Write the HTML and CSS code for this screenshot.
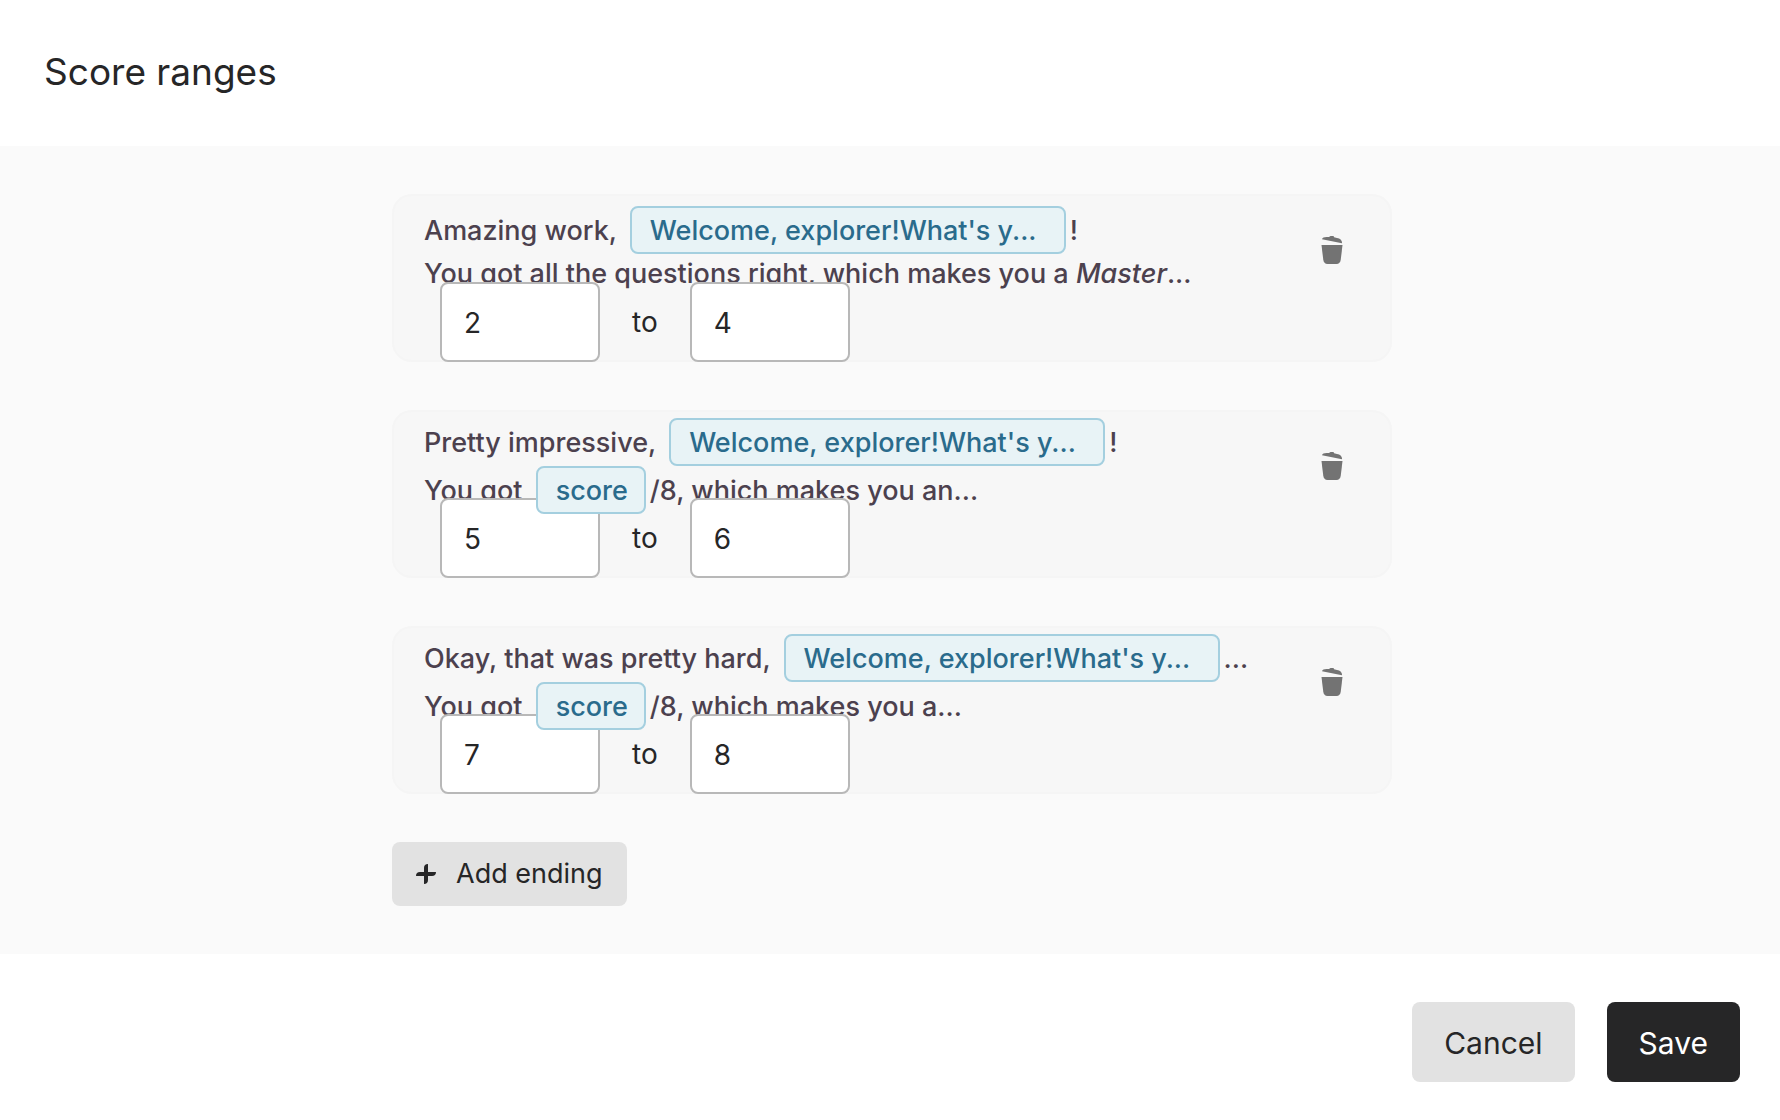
FILE: index.html
```html
<!DOCTYPE html>
<html lang="en">
<head>
  <meta charset="utf-8">
  <meta name="viewport" content="width=device-width, initial-scale=1">
  <title>Score ranges</title>
  <link rel="stylesheet" href="styles.css">
</head>
<body>
  <svg class="sprite" aria-hidden="true">
    <symbol id="icon-trash" viewBox="0 0 22 28">
      <path d="M1 3.200C1.300 1.600 3.200.9 5.600.9L8.200 1c.3-.7.9-1 1.700-1h1.700c.9 0 1.400.5 1.500 1.300l2.900.6c3 .6 5 2 5 4.700v.7z"/>
      <path d="M.5 9h21l-1.700 14.300c-.4 3.300-1.800 4.700-4.300 4.700h-9c-2.500 0-3.900-1.400-4.300-4.700z"/>
    </symbol>
    <symbol id="icon-plus" viewBox="0 0 20 20">
      <path d="M8 12H0c0-2.600 1.400-4 4-4h4V4c0-2.600 1.400-4 4-4v8h8c0 2.600-1.400 4-4 4h-4v4c0 2.600-1.400 4-4 4z"/>
    </symbol>
  </svg>

  <form class="dialog">
    <header class="dialog-header">
      <h1 class="title">Score ranges</h1>
    </header>

    <main class="dialog-body">
      <div class="endings">
        <section class="ending">
          <div class="ending-head">
            <div class="ending-text">
              <p class="line">Amazing work, <span class="chip chip-long">Welcome, explorer!What's y...</span>!</p>
              <p class="line">You got all the questions right, which makes you a <em>Master</em>...</p>
            </div>
            <button class="delete" type="button" aria-label="Delete ending"><svg class="trash"><use href="#icon-trash"/></svg></button>
          </div>
          <div class="range">
            <input class="score" id="from-1" type="text" inputmode="numeric" value="2" aria-label="From score">
            <label for="to-1">to</label>
            <input class="score" id="to-1" type="text" inputmode="numeric" value="4">
          </div>
        </section>

        <section class="ending">
          <div class="ending-head">
            <div class="ending-text">
              <p class="line">Pretty impressive, <span class="chip chip-long">Welcome, explorer!What's y...</span>!</p>
              <p class="line">You got <span class="chip">score</span>/8, which makes you an...</p>
            </div>
            <button class="delete" type="button" aria-label="Delete ending"><svg class="trash"><use href="#icon-trash"/></svg></button>
          </div>
          <div class="range">
            <input class="score" id="from-2" type="text" inputmode="numeric" value="5" aria-label="From score">
            <label for="to-2">to</label>
            <input class="score" id="to-2" type="text" inputmode="numeric" value="6">
          </div>
        </section>

        <section class="ending">
          <div class="ending-head">
            <div class="ending-text">
              <p class="line">Okay, that was pretty hard, <span class="chip chip-long">Welcome, explorer!What's y...</span>...</p>
              <p class="line">You got <span class="chip">score</span>/8, which makes you a...</p>
            </div>
            <button class="delete" type="button" aria-label="Delete ending"><svg class="trash"><use href="#icon-trash"/></svg></button>
          </div>
          <div class="range">
            <input class="score" id="from-3" type="text" inputmode="numeric" value="7" aria-label="From score">
            <label for="to-3">to</label>
            <input class="score" id="to-3" type="text" inputmode="numeric" value="8">
          </div>
        </section>

        <button class="button button-add" type="button"><svg class="plus" aria-hidden="true"><use href="#icon-plus"/></svg>Add ending</button>
      </div>
    </main>

    <footer class="dialog-footer">
      <button class="button button-large" type="button">Cancel</button>
      <button class="button button-large button-primary" type="submit">Save</button>
    </footer>
  </form>
</body>
</html>
```
FILE: styles.css
```css
* {
  box-sizing: border-box;
}

body {
  margin: 0;
  background: #fff;
  color: #262627;
  font-family: Inter, "Liberation Sans", sans-serif;
  font-size: 28px;
  line-height: 40px;
}

button,
input {
  font: inherit;
  color: inherit;
}

button {
  border: 0;
  cursor: pointer;
}

.sprite {
  display: none;
}

.dialog {
  display: flex;
  flex-direction: column;
}

.dialog-header {
  padding: 48px 44px 50px;
}

.title {
  margin: 0;
  font-size: 37px;
  font-weight: 400;
  line-height: 48px;
}

.dialog-body {
  padding: 48px 0 48px 4px;
  background: #fafafa;
}

.endings {
  display: flex;
  flex-direction: column;
  gap: 48px;
  max-width: 1000px;
  margin: 0 auto;
}

.ending {
  border-radius: 20px;
  background: #f7f7f7;
  box-shadow: inset 0 0 0 2px #f5f5f5;
}

.ending-head {
  display: flex;
  align-items: center;
  justify-content: space-between;
  min-height: 112px;
  padding: 0 49px 0 32px;
}

.ending-text {
  color: #4c414e;
  font-size: 27px;
  font-weight: 500;
  white-space: nowrap;
}

.line {
  display: flex;
  align-items: baseline;
  margin: 0;
  white-space: pre;
}

.chip {
  position: relative;
  z-index: 1;
  margin: 0 4px 0 6px;
  padding: 3px 16px 1px 18px;
  border: 2px solid #a4cfdf;
  border-radius: 8px;
  background: #e8f3f6;
  color: #2a6b8c;
}

.chip-long {
  width: 436px;
}

/* The score row rides up over the last line of the ending's text. */
.range {
  display: flex;
  align-items: center;
  gap: 32px;
  margin-top: -24px;
  padding-left: 48px;
}

.score {
  width: 160px;
  height: 80px;
  padding: 2px 22px 0;
  border: 2px solid #b8b8b8;
  border-radius: 8px;
  background: #fff;
}

.delete {
  display: flex;
  padding: 0;
  background: none;
  color: #737373;
}

.trash {
  width: 22px;
  height: 28px;
  fill: currentColor;
}

.plus {
  width: 20px;
  height: 20px;
  fill: currentColor;
}

.button {
  border-radius: 8px;
  background: #e2e2e2;
}

.button-add {
  display: flex;
  align-items: center;
  align-self: flex-start;
  gap: 20px;
  padding: 12px 24px;
  font-size: 27px;
}

.button-large {
  padding: 21px 32px 19px;
  font-size: 30px;
}

.button-primary {
  background: #262627;
  color: #fff;
}

.dialog-footer {
  display: flex;
  justify-content: flex-end;
  gap: 32px;
  padding: 48px 40px 38px;
}
```
